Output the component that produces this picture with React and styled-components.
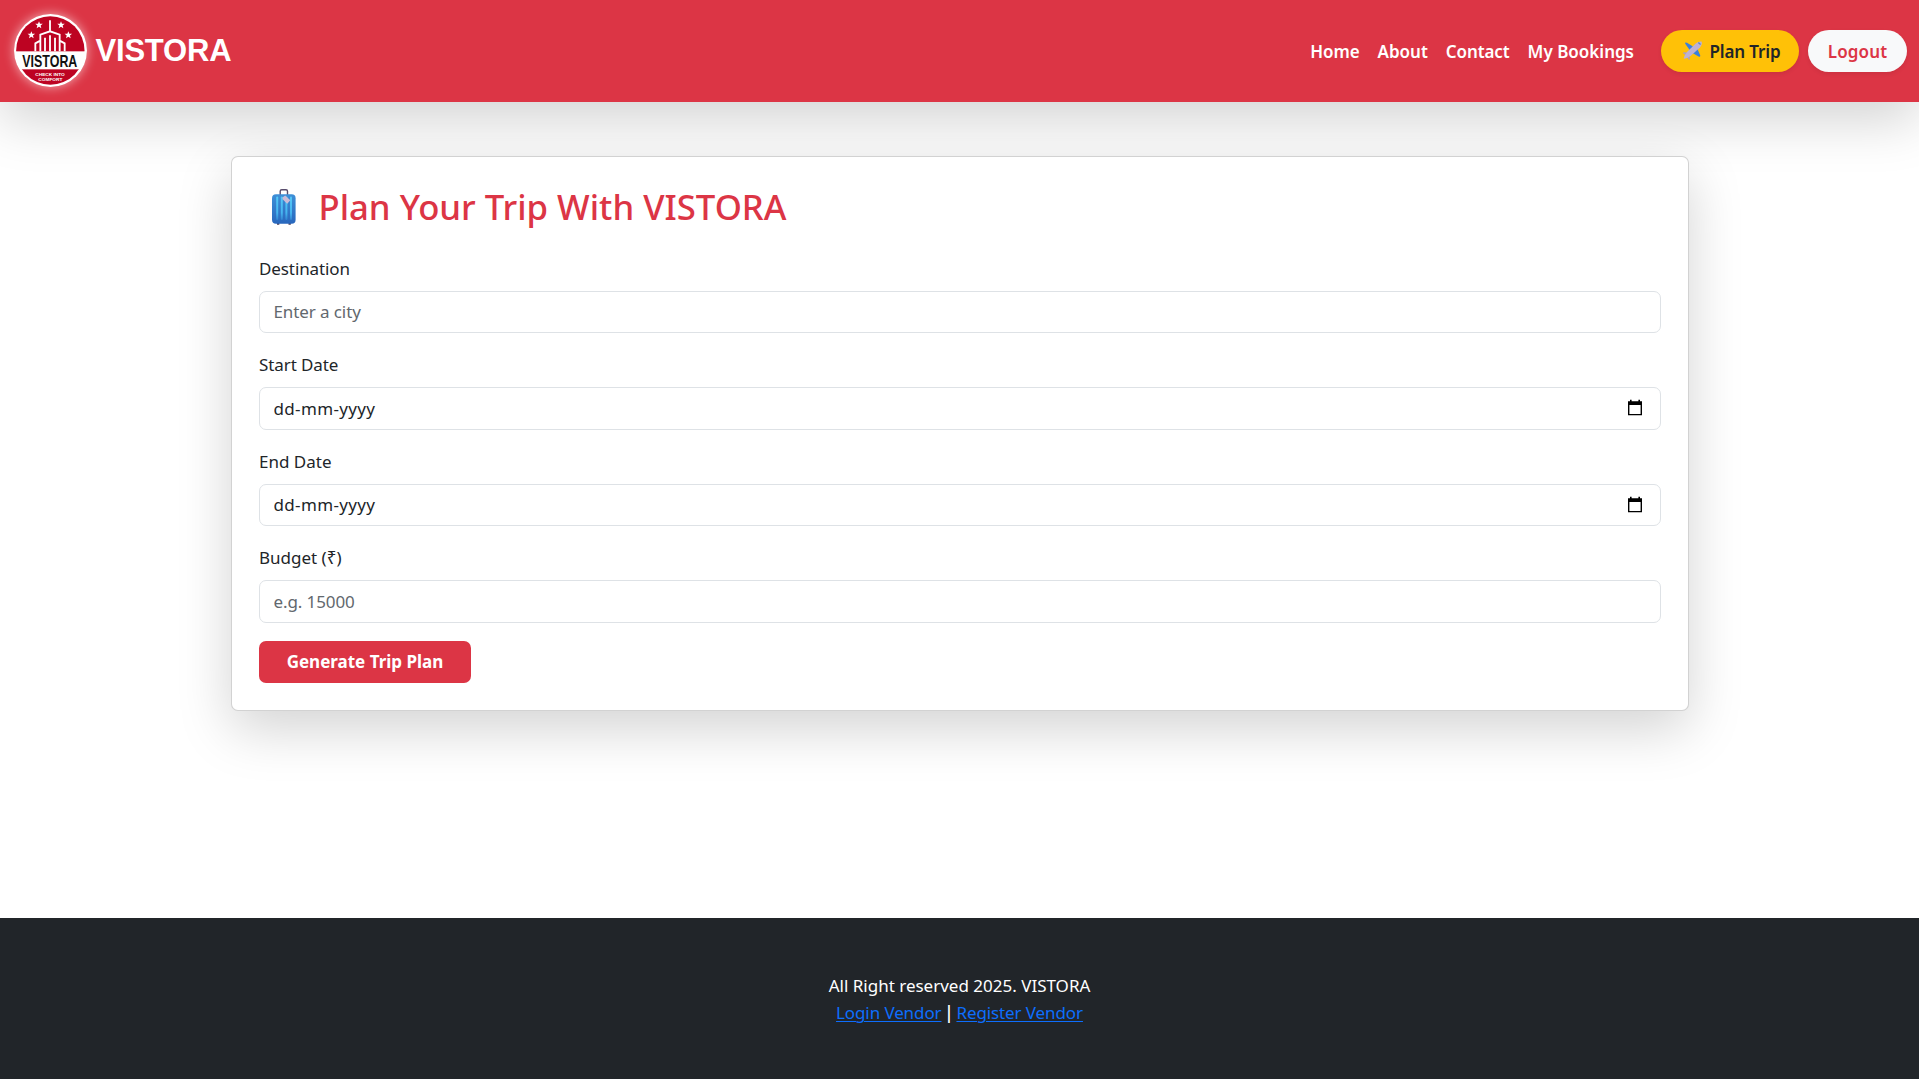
import React from "react";
import styled, { createGlobalStyle } from "styled-components";

const GlobalStyle = createGlobalStyle`
  *, *::before, *::after { box-sizing: border-box; }
  body {
    margin: 0;
    background: #fff;
    color: #212529;
    font: 400 17px/27px "Noto Sans", "Open Sans", sans-serif;
  }
`;

const Page = styled.div`
  display: flex;
  flex-direction: column;
  min-height: 1079px;
`;

const Header = styled.header`
  display: flex;
  align-items: center;
  justify-content: space-between;
  height: 102px;
  padding: 0 12px 0 14px;
  background: #dc3545;
  box-shadow: 0 18px 54px rgba(0, 0, 0, 0.175);
`;

const Brand = styled.a`
  display: flex;
  align-items: center;
  gap: 8.5px;
`;

const LogoFrame = styled.span`
  width: 73px;
  height: 73px;
  margin-bottom: 1px;
  border-radius: 50%;
  box-shadow: 0 0 11px rgba(255, 255, 255, 0.6);

  svg { display: block; overflow: visible; }
`;

const BrandName = styled.span`
  color: #fff;
  font: 700 31px/36px "Liberation Sans", Arial, sans-serif;
  letter-spacing: -0.2px;
`;

const Nav = styled.nav`
  display: flex;
  align-items: center;
`;

const NavLink = styled.a`
  padding: 0 9px;
  color: #fff;
  font-weight: 600;
  letter-spacing: ${(p) => p.$track || 0}px;
`;

const PillButton = styled.button`
  display: flex;
  align-items: center;
  justify-content: center;
  width: ${(p) => p.$width}px;
  height: 42px;
  margin-left: ${(p) => p.$gap}px;
  padding: 0;
  border: 0;
  border-radius: 50px;
  background: ${(p) => p.$bg};
  color: ${(p) => p.$fg};
  font: inherit;
  font-weight: 600;
  letter-spacing: ${(p) => p.$track || 0}px;
  box-shadow: 0 2px 4.5px rgba(0, 0, 0, 0.075);

  svg { margin-right: 5px; }
`;

const Main = styled.main`
  flex: 1;
  padding: 54px 230px 0 231px;
`;

const Card = styled.section`
  height: 555.4px;
  padding: 27px;
  border: 1px solid rgba(0, 0, 0, 0.175);
  border-radius: 7px;
  background: #fff;
  box-shadow: 0 18px 54px rgba(0, 0, 0, 0.175);
`;

const Title = styled.h2`
  display: flex;
  align-items: center;
  margin: 0 0 25.9px;
  color: #dc3545;
  font-size: 34.7px;
  font-weight: 500;
  line-height: 45px;

  svg { margin-right: 9.5px; }
`;

const Field = styled.div`
  margin-bottom: 18px;
`;

const Label = styled.label`
  display: block;
  margin-bottom: 9px;
  letter-spacing: ${(p) => p.$track || 0}px;
`;

const Control = styled.div`
  display: flex;
  align-items: center;
  height: 42.5px;
  padding: 0 16px 1px 13.5px;
  border: 1px solid #dee2e6;
  border-radius: 7px;
  background: #fff;
`;

const Input = styled.input`
  flex: 1;
  min-width: 0;
  padding: 0;
  border: 0;
  outline: 0;
  background: transparent;
  color: #212529;
  font: inherit;
  letter-spacing: ${(p) => p.$track || 0}px;

  &::placeholder {
    color: ${(p) => (p.$date ? "#212529" : "#62686e")};
    opacity: 1;
  }
`;

const SubmitButton = styled.button`
  width: 212px;
  height: 42.5px;
  padding: 0 0 1px;
  border: 0;
  border-radius: 7px;
  background: #dc3545;
  color: #fff;
  font: inherit;
  font-weight: 700;
`;

const Footer = styled.footer`
  height: 161px;
  padding-top: 54px;
  background: #212529;
  color: #fff;
  text-align: center;
`;

const FooterLine = styled.p`
  margin: 0;
  letter-spacing: ${(p) => p.$track || 0}px;
`;

const FooterLink = styled.a`
  color: #0d6efd;
  text-decoration: underline;
  text-decoration-thickness: 1px;
  text-underline-offset: 2px;
`;

const Divider = styled.span`
  font-weight: 600;
  margin: 0 -1.5px;
`;

const STAR = "M0-10L2.6-3.4 9.8-3.1 4.2 1.4 6.1 8.3 0 4.4-6.1 8.3-4.2 1.4-9.8-3.1-2.6-3.4Z";

function Logo() {
  return (
    <svg width="73" height="73" viewBox="42 44 219 219">
      <defs>
        <clipPath id="disc">
          <circle cx="151" cy="153.5" r="102.5" />
        </clipPath>
      </defs>
      <circle cx="151.5" cy="153.5" r="109.5" fill="#fff" />
      <g clipPath="url(#disc)">
        <rect x="42" y="44" width="219" height="112" fill="#bd0322" />
        <rect x="42" y="210" width="219" height="54" fill="#bd0322" />
      </g>
      <g fill="#fff">
        {[[117, 77], [183, 77], [94, 107], [205, 107]].map(([x, y]) => (
          <path key={x} d={STAR} transform={`translate(${x} ${y}) scale(1.15)`} />
        ))}
      </g>
      <path
        d="M150 63V98M121 156V106L150 96L179 106V156M106 156V132L121 124M194 156V132L179 124M135 156V115M150 156V108M165 156V115"
        fill="none"
        stroke="#fff"
        strokeWidth="5.5"
      />
      <text
        x="67" y="203" textLength="165" lengthAdjust="spacingAndGlyphs"
        fontFamily="Liberation Sans, Arial, sans-serif" fontWeight="700" fontSize="51" fill="#111"
      >VISTORA</text>
      <g fill="#fff" fontFamily="Liberation Sans, Arial, sans-serif" fontWeight="700" fontSize="13">
        <text x="106" y="230" textLength="88" lengthAdjust="spacingAndGlyphs">CHECK INTO</text>
        <text x="115" y="244" textLength="72" lengthAdjust="spacingAndGlyphs">COMFORT</text>
      </g>
    </svg>
  );
}

function Plane() {
  return (
    <svg width="25" height="22" viewBox="0 0 25 22">
      <path d="M14 6.5L8 2.8Q5.6 2 6.2 3.8L11 10.5ZM18 8L21.3 15.4Q21.3 17.2 20 16.8L13.5 13Z" fill="#3b7fdc" />
      <path d="M8 12.6L4.4 12.2 4 13.3 7 15.3ZM10 15L11 19 9.8 19.9 7.8 16.5Z" fill="#a99fc4" />
      <path d="M22.5 1.6Q20 1 17 3.3L8 12Q4.8 16.3 4.7 18.7Q7.4 19 11.5 15.9L21 7.4Q23.8 4 22.5 1.6Z" fill="#bdb1d3" />
      <path d="M19.3 2.6L21.6 4.6" stroke="#5787c8" strokeWidth="1.3" />
    </svg>
  );
}

function Suitcase() {
  return (
    <svg width="50" height="45" viewBox="0 0 50 45">
      <defs>
        <linearGradient id="shell" x1="0" y1="0" x2="0" y2="1">
          <stop offset="0" stopColor="#3e90d8" />
          <stop offset="1" stopColor="#2867bd" />
        </linearGradient>
        <linearGradient id="rib" x1="0" y1="0" x2="0" y2="1">
          <stop offset="0" stopColor="#55c9f7" />
          <stop offset="0.7" stopColor="#45b5ef" />
          <stop offset="1" stopColor="#3183d0" />
        </linearGradient>
      </defs>
      <path d="M21.2 11V7.3Q21.2 5.8 22.7 5.8H27Q28.5 5.8 28.5 7.3V11" fill="none" stroke="#594c6c" strokeWidth="1.4" />
      <path d="M18 38V40.8H20.3V38ZM29.5 38V40.8H31.8V38Z" fill="#453b58" />
      <rect x="13" y="10.2" width="23.6" height="29.5" rx="4" fill="url(#shell)" />
      <g fill="url(#rib)">
        <rect x="17.2" y="12.5" width="2" height="23.5" rx="1" />
        <rect x="21.8" y="12.5" width="2" height="23.5" rx="1" />
        <rect x="26.4" y="12.5" width="2" height="23.5" rx="1" />
        <rect x="31" y="12.5" width="2" height="23.5" rx="1" />
      </g>
      <path d="M23.4 13.5L26.2 11.4L31.3 16.2L28.2 19.8L23.6 15.2Z" fill="#cbbbd6" />
    </svg>
  );
}

function CalendarIcon() {
  return (
    <svg width="18" height="18" viewBox="0 0 18 18">
      <path d="M4 0.7H5.6V2.3H12.4V0.7H14V2.3H16V16.3H2V2.3H4ZM3.4 6V14.9H14.6V6Z" fill="#000" fillRule="evenodd" />
    </svg>
  );
}

const navLinks = [
  { text: "Home", track: -0.1 },
  { text: "About", track: 0 },
  { text: "Contact", track: -0.1 },
  { text: "My Bookings", track: 0 },
];

const fields = [
  { label: "Destination", hint: "Enter a city", labelTrack: -0.1, track: -0.1 },
  { label: "Start Date", hint: "dd-mm-yyyy", date: true, labelTrack: -0.1, track: 0.35 },
  { label: "End Date", hint: "dd-mm-yyyy", date: true, track: 0.35 },
  { label: "Budget (₹)", hint: "e.g. 15000", track: -0.1 },
];

export default function App() {
  return (
    <Page>
      <GlobalStyle />
      <Header>
        <Brand>
          <LogoFrame><Logo /></LogoFrame>
          <BrandName>VISTORA</BrandName>
        </Brand>
        <Nav>
          {navLinks.map((l) => (
            <NavLink key={l.text} $track={l.track}>{l.text}</NavLink>
          ))}
          <PillButton $width={138} $gap={18} $bg="#ffc107" $fg="#212529" $track={-0.1}>
            <Plane />
            Plan Trip
          </PillButton>
          <PillButton $width={99} $gap={9} $bg="#f8f9fa" $fg="#dc3545" $track={0.15}>
            Logout
          </PillButton>
        </Nav>
      </Header>
      <Main>
        <Card>
          <Title>
            <Suitcase />
            Plan Your Trip With VISTORA
          </Title>
          {fields.map((f) => (
            <Field key={f.label}>
              <Label $track={f.labelTrack}>{f.label}</Label>
              <Control>
                <Input type="text" placeholder={f.hint} $date={f.date} $track={f.track} />
                {f.date && <CalendarIcon />}
              </Control>
            </Field>
          ))}
          <SubmitButton>Generate Trip Plan</SubmitButton>
        </Card>
      </Main>
      <Footer>
        <FooterLine>All Right reserved 2025. VISTORA</FooterLine>
        <FooterLine $track={-0.1}>
          <FooterLink>Login Vendor</FooterLink> <Divider>|</Divider> <FooterLink>Register Vendor</FooterLink>
        </FooterLine>
      </Footer>
    </Page>
  );
}
